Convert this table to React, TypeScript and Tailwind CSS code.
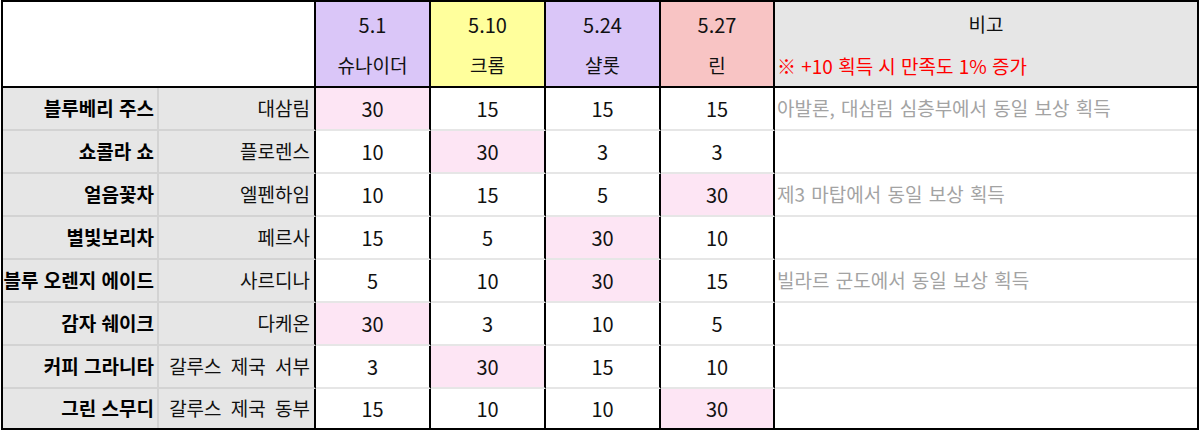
import React from "react";

type Row = { name: string; loc: string; vals: number[]; hi: number; remark?: string };

const rows: Row[] = [
  { name: "블루베리 주스", loc: "대삼림", vals: [30, 15, 15, 15], hi: 0, remark: "아발론, 대삼림 심층부에서 동일 보상 획득" },
  { name: "쇼콜라 쇼", loc: "플로렌스", vals: [10, 30, 3, 3], hi: 1 },
  { name: "얼음꽃차", loc: "엘펜하임", vals: [10, 15, 5, 30], hi: 3, remark: "제3 마탑에서 동일 보상 획득" },
  { name: "별빛보리차", loc: "페르사", vals: [15, 5, 30, 10], hi: 2 },
  { name: "블루 오렌지 에이드", loc: "사르디나", vals: [5, 10, 30, 15], hi: 2, remark: "빌라르 군도에서 동일 보상 획득" },
  { name: "감자 쉐이크", loc: "다케온", vals: [30, 3, 10, 5], hi: 0 },
  { name: "커피 그라니타", loc: "갈루스 제국 서부", vals: [3, 30, 15, 10], hi: 1 },
  { name: "그린 스무디", loc: "갈루스 제국 동부", vals: [15, 10, 10, 30], hi: 3 },
];

const colW = ["w-[115px]", "w-[115px]", "w-[115px]", "w-[114px]"];

const headers = [
  { date: "5.1", name: "슈나이더", bg: "bg-[#dac6f8]" },
  { date: "5.10", name: "크롬", bg: "bg-[#ffff9c]" },
  { date: "5.24", name: "샬롯", bg: "bg-[#dac6f8]" },
  { date: "5.27", name: "린", bg: "bg-[#f8c4c4]" },
];

export default function App() {
  return (
    <div className="bg-white w-[1200px] h-[431px] font-['Noto_Sans_CJK_KR','Noto_Sans',sans-serif] text-[19px] text-[#111] [word-spacing:2px]">
      <div className="ml-[1px] w-[1198px] h-[430px] border-2 border-black flex flex-col overflow-hidden">
        {/* header */}
        <div className="flex h-[86px] shrink-0 border-b-2 border-black">
          <div className="w-[313px] border-r-2 border-black bg-white" />
          {headers.map((h, i) => (
            <div key={h.date} className={`${colW[i]} ${h.bg} border-r-2 border-black flex flex-col`}>
              <div className="h-[46px] flex items-center justify-center text-[20px]">{h.date}</div>
              <div className="flex-1 flex items-center justify-center pb-[4px]">{h.name}</div>
            </div>
          ))}
          <div className="flex-1 bg-[#e6e6e6] flex flex-col">
            <div className="h-[46px] flex items-center justify-center pb-[1px]">비고</div>
            <div className="flex-1 flex items-center pl-[2px] pb-[2px] text-[#ff0000] [word-spacing:1px]">※ +10 획득 시 만족도 1% 증가</div>
          </div>
        </div>
        {/* rows */}
        {rows.map((r, ri) => {
          const last = ri === rows.length - 1;
          const bb = last ? "" : "border-b-2";
          return (
            <div key={r.name} className={`flex shrink-0 ${last ? "flex-1" : "h-[43px]"}`}>
              <div className={`w-[156px] bg-[#e6e6e6] border-r-2 border-[#d3d3d3] ${bb} flex items-center justify-end pr-[3px] font-bold whitespace-nowrap text-black [word-spacing:1px]`}>
                {r.name}
              </div>
              <div className={`w-[157px] bg-[#e6e6e6] border-r-2 border-r-black ${bb} border-b-[#d3d3d3] flex items-center justify-end pr-[4px] whitespace-nowrap [word-spacing:5px]`}>
                {r.loc}
              </div>
              {r.vals.map((v, vi) => (
                <div
                  key={vi}
                  className={`${colW[vi]} ${vi === r.hi ? "bg-[#fde5f4]" : "bg-white"} border-r-2 border-r-black ${bb} border-b-[#e6e6e6] flex items-center justify-center text-[20px]`}
                >
                  {v}
                </div>
              ))}
              <div className={`flex-1 ${bb} border-b-[#e6e6e6] flex items-center pl-[2px] text-[#a3a3a3] whitespace-nowrap`}>
                {r.remark ?? ""}
              </div>
            </div>
          );
        })}
      </div>
    </div>
  );
}
